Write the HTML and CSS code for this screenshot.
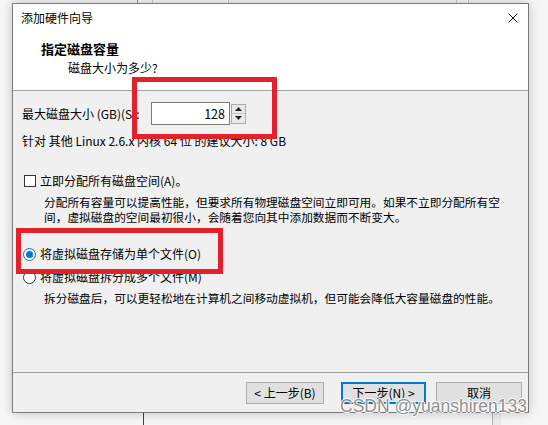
FILE: index.html
```html
<!DOCTYPE html>
<html lang="zh-CN">
<head>
<meta charset="utf-8">
<title>添加硬件向导</title>
<link rel="stylesheet" href="styles.css">
</head>
<body>
<div class="desktop">
  <div class="backdrop">
    <span class="bg-line l1"></span>
    <span class="bg-line l2"></span>
    <span class="bg-line l3"></span>
    <span class="bg-line l4"></span>
    <span class="bg-line l5"></span>
    <span class="bg-line l6"></span>
    <span class="bg-bar"></span>
  </div>

  <div class="dialog">
    <div class="top">
      <div class="titlebar">
        <span class="title">添加硬件向导</span>
        <svg class="close" width="10" height="10" viewBox="0 0 10 10"><path d="M0.5 0.5 L9.5 9.5 M9.5 0.5 L0.5 9.5" stroke="#111" stroke-width="1" fill="none"/></svg>
      </div>
      <div class="header">
        <div class="h-title">指定磁盘容量</div>
        <div class="h-sub">磁盘大小为多少?</div>
      </div>
    </div>

    <div class="body">
      <div class="size-row">
        <span class="label">最大磁盘大小 (GB)(S):</span>
        <div class="spin-input">128</div>
        <div class="spinner">
          <div class="spin-btn"><svg width="7" height="4" viewBox="0 0 7 4"><path d="M3.5 0 L7 4 L0 4 Z" fill="#222"/></svg></div>
          <div class="spin-btn"><svg width="7" height="4" viewBox="0 0 7 4"><path d="M0 0 L7 0 L3.5 4 Z" fill="#222"/></svg></div>
        </div>
      </div>
      <div class="recommend">针对 其他 Linux 2.6.x 内核 64 位 的建议大小: 8 GB</div>

      <div class="option check-opt">
        <span class="checkbox"></span>
        <span>立即分配所有磁盘空间(A)。</span>
      </div>
      <div class="desc">分配所有容量可以提高性能，但要求所有物理磁盘空间立即可用。如果不立即分配所有空<br>间，虚拟磁盘的空间最初很小，会随着您向其中添加数据而不断变大。</div>

      <div class="option radio-opt1">
        <span class="radio checked"><span class="dot"></span></span>
        <span>将虚拟磁盘存储为单个文件(O)</span>
      </div>
      <div class="option radio-opt2">
        <span class="radio"></span>
        <span>将虚拟磁盘拆分成多个文件(M)</span>
      </div>
      <div class="desc desc2">拆分磁盘后，可以更轻松地在计算机之间移动虚拟机，但可能会降低大容量磁盘的性能。</div>
    </div>

    <div class="footer">
      <button class="btn btn-back">&lt; 上一步(B)</button>
      <button class="btn btn-next">下一步(N) &gt;</button>
      <button class="btn btn-cancel">取消</button>
    </div>
  </div>

  <div class="mark mark1"></div>
  <div class="mark mark2"></div>
  <div class="watermark">CSDN @yuanshiren133</div>
</div>
</body>
</html>
```

FILE: styles.css
```css
* { box-sizing: border-box; }

html, body {
  margin: 0;
  padding: 0;
}

body {
  width: 548px;
  height: 425px;
  overflow: hidden;
  background: #f6f6f6;
  font-family: "Noto Sans CJK SC", "Microsoft YaHei", "Noto Sans", sans-serif;
  font-size: 12px;
  color: #000;
}

.desktop {
  position: relative;
  width: 548px;
  height: 425px;
  padding: 3px 0 0 12px;
}

/* window behind the dialog */
.backdrop {
  position: absolute;
  inset: 0;
  z-index: 0;
}
.bg-line {
  position: absolute;
  width: 1px;
  background: #9a9a9a;
}
.l1 { left: 137px; top: 0; height: 4px; }
.l2 { left: 152px; top: 0; height: 4px; background: #c8c8c8; }
.l3 { left: 228px; top: 0; height: 4px; background: #c8c8c8; }
.l4 { left: 456px; top: 0; height: 4px; background: #c8c8c8; }
.l5 { left: 468px; top: 0; height: 4px; background: #c8c8c8; }
.l6 { left: 143px; top: 410px; height: 15px; background: #444; }
.bg-bar {
  position: absolute;
  left: 492px;
  top: 410px;
  width: 9px;
  height: 15px;
  border-left: 1px solid #b5b5b5;
  background: #ececec;
}

.dialog {
  position: relative;
  z-index: 1;
  width: 517px;
  height: 410px;
  background: #f0f0f0;
  border: 1px solid #7a7a7a;
  box-shadow: 0 0 10px rgba(0, 0, 0, 0.22);
  display: flex;
  flex-direction: column;
}

.top {
  background: #fff;
  height: 87px;
  border-bottom: 1px solid #a0a0a0;
}

.titlebar {
  height: 27px;
  display: flex;
  align-items: center;
  justify-content: space-between;
  padding: 0 10px 0 8px;
}
.title { line-height: 16px; }
.close { display: block; margin-top: 0; }

.header {
  padding: 10px 0 0 28px;
}
.h-title {
  font-weight: bold;
  font-size: 13px;
  line-height: 16px;
}
.h-sub {
  padding-left: 27px;
  margin-top: 3px;
  line-height: 16px;
}

.body {
  flex: 1;
  padding: 11px 0 0 9px;
}

.size-row {
  display: flex;
  align-items: center;
  height: 23px;
}
.label {
  width: 129px;
  line-height: 16px;
}
.spin-input {
  width: 79px;
  height: 23px;
  background: #fff;
  border: 1px solid #7a7a7a;
  text-align: right;
  padding-right: 4px;
  line-height: 21px;
  font-size: 12.5px;
}
.spinner {
  margin-left: 1px;
  width: 15px;
  height: 20px;
  display: flex;
  flex-direction: column;
  border: 1px solid #adadad;
  background: #e8e8e8;
}
.spin-btn {
  flex: 1;
  display: flex;
  align-items: center;
  justify-content: center;
}
.spin-btn + .spin-btn { border-top: 1px solid #c8c8c8; }
.spin-btn svg { display: block; }

.recommend {
  margin-top: 8px;
  line-height: 16px;
}

.option {
  display: flex;
  align-items: center;
  height: 16px;
  line-height: 16px;
}
.check-opt { margin-top: 24px; padding-left: 2px; }
.checkbox {
  width: 12px;
  height: 12px;
  border: 1px solid #333;
  background: #fff;
  margin-right: 4px;
}

.desc {
  margin-top: 4.5px;
  padding-left: 22px;
  font-size: 11.7px;
  line-height: 15px;
  white-space: nowrap;
}

.radio-opt1 { margin-top: 22.5px; padding-left: 1px; }
.radio-opt2 { margin-top: 7px; padding-left: 1px; }
.radio {
  width: 13px;
  height: 13px;
  border-radius: 50%;
  border: 1px solid #333;
  background: #fff;
  margin-right: 4px;
  display: flex;
  align-items: center;
  justify-content: center;
}
.radio.checked { border-color: #0078d7; }
.radio .dot {
  width: 7px;
  height: 7px;
  border-radius: 50%;
  background: #0078d7;
}

.footer {
  height: 40px;
  border-top: 1px solid #a0a0a0;
  display: flex;
  justify-content: flex-end;
  align-items: flex-start;
  padding: 9px 6px 0 0;
}
.btn {
  height: 22px;
  font-family: inherit;
  font-size: 12px;
  line-height: 16px;
  background: #e1e1e1;
  border: 1px solid #adadad;
  color: #000;
  padding: 0;
}
.btn-back { width: 78px; }
.btn-next { width: 85px; margin-left: 17px; border: 2px solid #0078d7; }
.btn-cancel { width: 86px; margin-left: 10px; }

/* annotation marks over the dialog */
.mark {
  position: absolute;
  z-index: 2;
  border: 5px solid #e4212b;
}
.mark1 { left: 132px; top: 77px; width: 145px; height: 62px; }
.mark2 { left: 16px; top: 228px; width: 207px; height: 46px; }

.watermark {
  position: absolute;
  z-index: 3;
  left: 340px;
  top: 395px;
  font-family: "Liberation Sans", Arial, sans-serif;
  font-size: 17.5px;
  line-height: 22px;
  color: #8f8f8f;
  text-shadow: -1px 0 #fff, 1px 0 #fff, 0 -1px #fff, 0 1px #fff;
  white-space: nowrap;
}
```
